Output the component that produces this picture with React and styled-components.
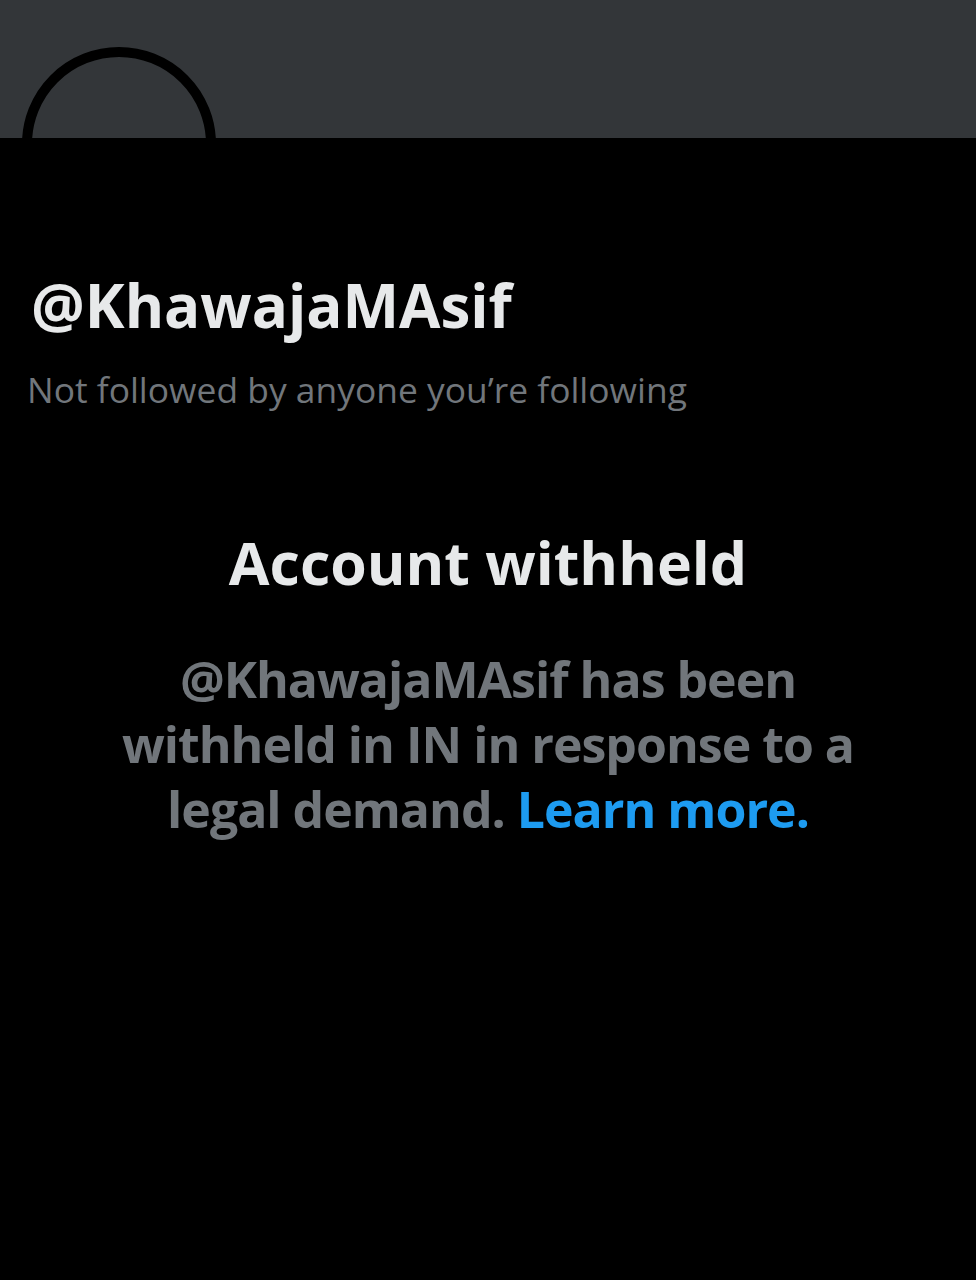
import styled, { createGlobalStyle } from 'styled-components'

const GlobalStyle = createGlobalStyle`
    body {
        margin: 0;
        background: #000;
        font-family: "Open Sans", "Noto Sans", sans-serif;
    }
`

const Page = styled.div`
    width: 976px;
    min-height: 1280px;
    background: #000;
`

const Banner = styled.div`
    position: relative;
    height: 138px;
    background: #333639;
    overflow: hidden;
`

const Avatar = styled.div`
    position: absolute;
    left: 22px;
    top: 47px;
    width: 194px;
    height: 194px;
    box-sizing: border-box;
    border: 10px solid #000;
    border-radius: 50%;
`

const Profile = styled.div`
    padding: 130px 0 0 27px;
`

const Handle = styled.h1`
    margin: 0 0 0 4px;
    font-size: 60px;
    line-height: 74px;
    font-weight: 700;
    color: #e7e9ea;
`

const FollowNote = styled.p`
    margin: 24px 0 0;
    font-size: 35.4px;
    line-height: 46px;
    color: #71767b;
`

const Notice = styled.div`
    display: flex;
    flex-direction: column;
    align-items: center;
    text-align: center;
    padding: 112px 100px 0;
`

const Title = styled.h2`
    margin: 0;
    font-size: 59px;
    line-height: 76px;
    font-weight: 700;
    color: #e7e9ea;
`

const Body = styled.p`
    margin: 47px 0 0;
    max-width: 770px;
    font-size: 50px;
    line-height: 65px;
    font-weight: 700;
    letter-spacing: -1px;
    color: #71767b;
`

const LearnMore = styled.a`
    color: #1d9bf0;
    text-decoration: none;
`

function App() {
    return (
        <Page>
            <GlobalStyle />
            <Banner>
                <Avatar />
            </Banner>
            <Profile>
                <Handle>@KhawajaMAsif</Handle>
                <FollowNote>Not followed by anyone you’re following</FollowNote>
            </Profile>
            <Notice>
                <Title>Account withheld</Title>
                <Body>
                    @KhawajaMAsif has been withheld in IN in response to a legal demand. <LearnMore href="#">Learn more.</LearnMore>
                </Body>
            </Notice>
        </Page>
    )
}

export default App
